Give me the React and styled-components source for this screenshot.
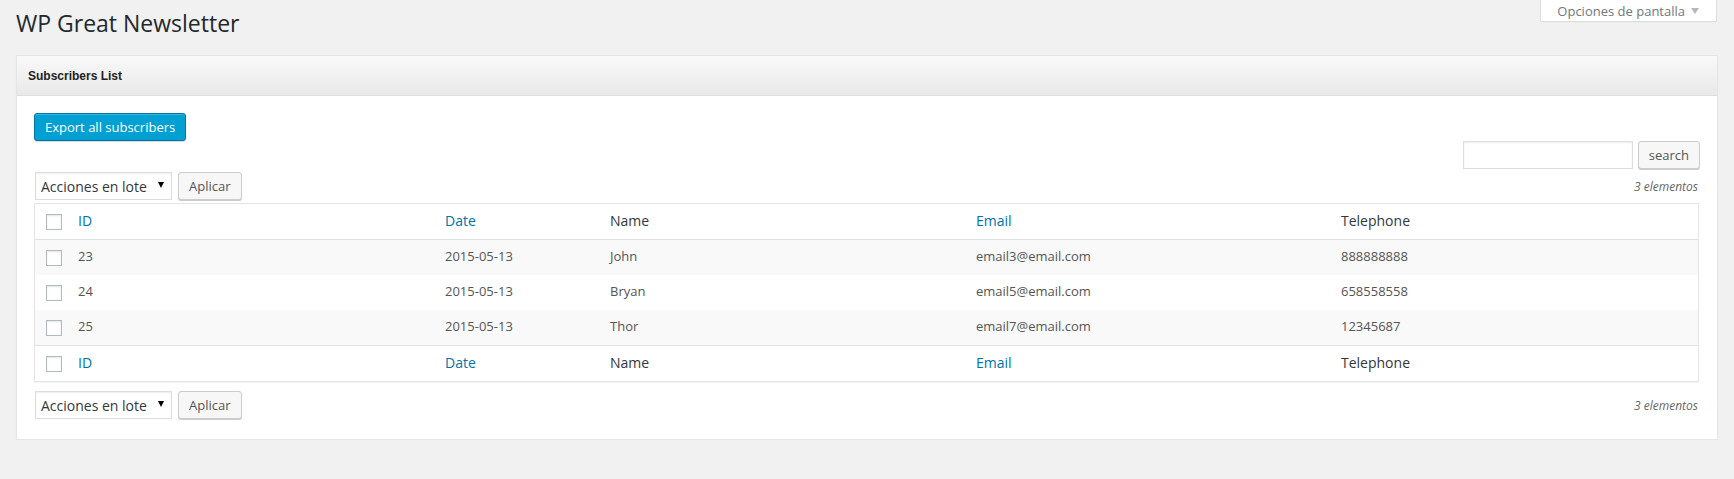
import React from 'react';
import styled, { createGlobalStyle } from 'styled-components';

const GlobalStyle = createGlobalStyle`
  body {
    margin: 0;
    background: #f1f1f1;
    font-family: "Open Sans", sans-serif;
    font-size: 13px;
    color: #444;
  }
`;

const Page = styled.div`
  padding: 0 16px;
`;

const TopBar = styled.div`
  display: flex;
  justify-content: space-between;
  align-items: flex-start;
  height: 55px;
`;

const Title = styled.h1`
  margin: 0;
  padding-top: 9px;
  font-size: 23px;
  font-weight: 400;
  line-height: 29px;
  color: #23282d;
`;

const ScreenTab = styled.button`
  display: flex;
  align-items: center;
  gap: 6px;
  height: 22px;
  margin-right: 1px;
  padding: 0 17px 0 16px;
  background: #fff;
  border: 1px solid #ddd;
  border-top: none;
  box-shadow: 0 1px 1px -1px rgba(0, 0, 0, 0.1);
  font-family: "Open Sans", sans-serif;
  font-size: 13px;
  color: #72777c;
`;

const Caret = styled.span`
  width: 0;
  height: 0;
  border-left: 4px solid transparent;
  border-right: 4px solid transparent;
  border-top: 6px solid #b4b9be;
`;

const Panel = styled.section`
  background: #fff;
  border: 1px solid #e5e5e5;
  box-shadow: 0 1px 1px rgba(0, 0, 0, 0.04);
`;

const PanelHeader = styled.h3`
  margin: 0;
  height: 39px;
  display: flex;
  align-items: center;
  padding: 0 11px;
  background: linear-gradient(to bottom, #f9f9f9, #e9e9e9);
  border-bottom: 1px solid #dfdfdf;
  font-family: "Liberation Sans", Arial, sans-serif;
  font-size: 12px;
  font-weight: 700;
  color: #222;
`;

const PanelBody = styled.div`
  padding: 17px 18px 20px 17px;
`;

const PrimaryButton = styled.button`
  display: block;
  height: 28px;
  padding: 0 10px 1px;
  background: #00a0d2;
  border: 1px solid #0073aa;
  border-radius: 3px;
  box-shadow: inset 0 1px 0 rgba(120, 200, 230, 0.5), 0 1px 0 rgba(0, 0, 0, 0.15);
  font-family: "Open Sans", sans-serif;
  font-size: 13px;
  color: #fff;
`;

const SearchRow = styled.div`
  display: flex;
  justify-content: flex-end;
  gap: 5px;
  height: 28px;
  margin-right: -1px;
`;

const SearchInput = styled.input`
  box-sizing: border-box;
  width: 170px;
  height: 28px;
  border: 1px solid #ddd;
  box-shadow: inset 0 1px 2px rgba(0, 0, 0, 0.07);
  font-family: "Open Sans", sans-serif;
`;

const Button = styled.button`
  box-sizing: border-box;
  height: 28px;
  padding: 0 10px 1px;
  background: #f7f7f7;
  border: 1px solid #ccc;
  border-radius: 3px;
  box-shadow: 0 1px 0 #ccc;
  font-family: "Open Sans", sans-serif;
  font-size: 13px;
  color: #555;
`;

const TableNav = styled.div`
  display: flex;
  align-items: center;
  justify-content: space-between;
  height: 28px;
  margin: ${(p) => (p.$bottom ? '9px 0 0' : '3px 0 3px')};
`;

const BulkActions = styled.div`
  display: flex;
  align-items: center;
  gap: 6px;
  padding-left: 1px;
`;

const FakeSelect = styled.div`
  box-sizing: border-box;
  display: flex;
  align-items: center;
  justify-content: space-between;
  width: 137px;
  height: 28px;
  padding: 0 7px 0 5px;
  background: #fff;
  border: 1px solid #ddd;
  box-shadow: inset 0 1px 2px rgba(0, 0, 0, 0.07);
  font-size: 14px;
  color: #32373c;
`;

const SelectArrow = styled.span`
  width: 0;
  height: 0;
  margin-top: -2px;
  border-left: 3px solid transparent;
  border-right: 3px solid transparent;
  border-top: 6px solid #000;
`;

const Count = styled.span`
  font-style: italic;
  font-size: 12px;
  color: #666;
  padding-right: 1px;
`;

const Table = styled.table`
  width: 100%;
  table-layout: fixed;
  border-collapse: separate;
  border-spacing: 0;
  border: 1px solid #e5e5e5;
  box-shadow: 0 1px 1px rgba(0, 0, 0, 0.04);
`;

const HeadCell = styled.th`
  height: 32px;
  padding: 0 10px 3px;
  text-align: left;
  font-weight: 400;
  font-size: 14px;
  color: ${(p) => (p.$link ? '#0073aa' : '#32373c')};
  border-${(p) => (p.$foot ? 'top' : 'bottom')}: 1px solid #e1e1e1;
`;

const CheckCell = styled.th`
  height: 35px;
  padding: 0 0 0 11px;
  text-align: left;
  border-${(p) => (p.$foot ? 'top' : 'bottom')}: 1px solid #e1e1e1;
`;

const Row = styled.tr`
  background: ${(p) => (p.$odd ? '#f9f9f9' : '#fff')};
`;

const Cell = styled.td`
  height: 32px;
  padding: 0 10px 3px;
  color: #555;
  font-size: 13px;
`;

const CheckBodyCell = styled.td`
  height: 35px;
  padding: 0 0 0 11px;
`;

const Checkbox = styled.span`
  display: block;
  box-sizing: border-box;
  width: 16px;
  height: 16px;
  background: #fff;
  border: 1px solid #b4b9be;
  box-shadow: inset 0 1px 2px rgba(0, 0, 0, 0.1);
`;

const columns = [
  { key: 'id', label: 'ID', width: 367, link: true },
  { key: 'date', label: 'Date', width: 165, link: true },
  { key: 'name', label: 'Name', width: 366, link: false },
  { key: 'email', label: 'Email', width: 365, link: true },
  { key: 'tel', label: 'Telephone', width: 367, link: false },
];

const subscribers = [
  { id: '23', date: '2015-05-13', name: 'John', email: 'email3@email.com', tel: '888888888' },
  { id: '24', date: '2015-05-13', name: 'Bryan', email: 'email5@email.com', tel: '658558558' },
  { id: '25', date: '2015-05-13', name: 'Thor', email: 'email7@email.com', tel: '12345687' },
];

function HeaderRow({ foot }) {
  return (
    <tr>
      <CheckCell $foot={foot}><Checkbox /></CheckCell>
      {columns.map((c) => (
        <HeadCell key={c.key} $link={c.link} $foot={foot}>{c.label}</HeadCell>
      ))}
    </tr>
  );
}

function Bulk() {
  return (
    <BulkActions>
      <FakeSelect>
        Acciones en lote
        <SelectArrow />
      </FakeSelect>
      <Button>Aplicar</Button>
    </BulkActions>
  );
}

export default function App() {
  return (
    <Page>
      <GlobalStyle />
      <TopBar>
        <Title>WP Great Newsletter</Title>
        <ScreenTab>
          Opciones de pantalla
          <Caret />
        </ScreenTab>
      </TopBar>
      <Panel>
        <PanelHeader>Subscribers List</PanelHeader>
        <PanelBody>
          <PrimaryButton>Export all subscribers</PrimaryButton>
          <SearchRow>
            <SearchInput type="search" />
            <Button>search</Button>
          </SearchRow>
          <TableNav>
            <Bulk />
            <Count>3 elementos</Count>
          </TableNav>
          <Table>
            <colgroup>
              <col style={{ width: 33 }} />
              {columns.map((c) => <col key={c.key} style={{ width: c.width }} />)}
            </colgroup>
            <thead>
              <HeaderRow />
            </thead>
            <tbody>
              {subscribers.map((s, i) => (
                <Row key={s.id} $odd={i % 2 === 0}>
                  <CheckBodyCell><Checkbox /></CheckBodyCell>
                  {columns.map((c) => <Cell key={c.key}>{s[c.key]}</Cell>)}
                </Row>
              ))}
            </tbody>
            <tfoot>
              <HeaderRow foot />
            </tfoot>
          </Table>
          <TableNav $bottom>
            <Bulk />
            <Count>3 elementos</Count>
          </TableNav>
        </PanelBody>
      </Panel>
    </Page>
  );
}
